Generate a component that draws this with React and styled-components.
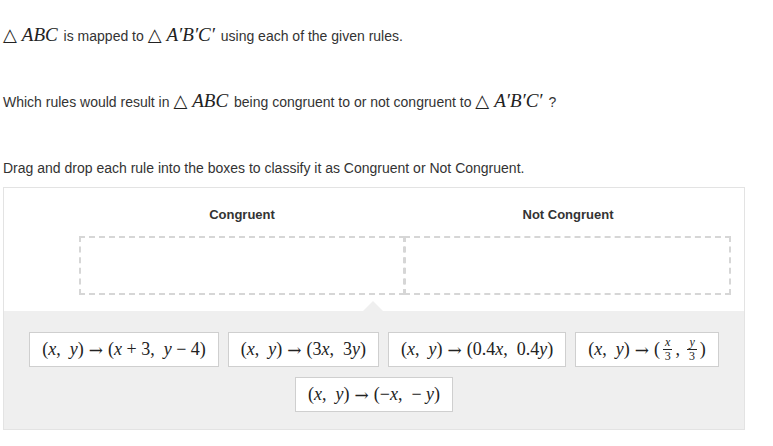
import React from "react";
import styled, { createGlobalStyle } from "styled-components";

const GlobalStyle = createGlobalStyle`
  body {
    margin: 0;
    background: #ffffff;
    font-family: "Liberation Sans", Arial, sans-serif;
    color: #333333;
  }
`;

const Page = styled.div`
  width: 773px;
  padding: 26px 0 0 3px;
  box-sizing: border-box;
`;

const Prompt = styled.p`
  margin: 0 0 ${props => props.gap || 46}px;
  font-size: 14px;
  line-height: 20px;
  height: 20px;
  white-space: nowrap;
`;

const Math = styled.span`
  font-family: "Liberation Serif", "DejaVu Serif", serif;
  font-size: 19px;
  line-height: 14px;
  color: #222;
  margin-right: 2px;
`;

const V = styled.i`
  font-style: italic;
`;

const Tri = styled.span`
  font-family: "DejaVu Sans", sans-serif;
  font-size: 18px;
  margin-right: 5px;
`;

const Panel = styled.div`
  width: 742px;
  border: 1px solid #e3e3e3;
  box-sizing: border-box;
`;

const Zones = styled.div`
  display: grid;
  grid-template-columns: 326px 326px;
  padding: 0 14px 16px 75px;
`;

const ZoneTitle = styled.div`
  font-weight: bold;
  font-size: 13px;
  text-align: center;
  line-height: 16px;
  padding: 19px 0 13px;
  color: #333;
`;

const DropBox = styled.div`
  height: 59px;
  border: 2px dashed #d6d6d6;
  box-sizing: border-box;
  margin-left: ${props => (props.joined ? "-1px" : "0")};
`;

const Tray = styled.div`
  position: relative;
  background: #efefef;
  padding: 21px 0 17px;
  display: flex;
  flex-direction: column;
  align-items: center;
  gap: 10px;
  &::before {
    content: "";
    position: absolute;
    top: -10px;
    left: 359px;
    border-left: 10px solid transparent;
    border-right: 10px solid transparent;
    border-bottom: 10px solid #efefef;
  }
`;

const ChipRow = styled.div`
  display: flex;
  gap: 9px;
`;

const Chip = styled.div`
  height: 35px;
  box-sizing: border-box;
  display: flex;
  align-items: center;
  padding: 0 12px;
  background: #fff;
  border: 1px solid #cfcfcf;
  font-family: "Liberation Serif", "DejaVu Serif", serif;
  font-size: 18px;
  color: #222;
  white-space: pre;
`;

const Frac = styled.span`
  display: inline-flex;
  flex-direction: column;
  align-items: center;
  font-size: 12px;
  line-height: 11px;
  margin: 0 3px;
  & > span:first-child {
    border-bottom: 1px solid #222;
    padding: 0 2px 1px;
    font-style: italic;
  }
  & > span:last-child {
    padding-top: 1px;
  }
`;

const Arrow = styled.span`
  font-family: "DejaVu Serif", serif;
  font-size: 17px;
  margin: 0 5px;
`;

const XY = () => (
  <>
    (<V>x</V>,  <V>y</V>)<Arrow>→</Arrow>
  </>
);

const Triangle = ({ children }) => (
  <Math>
    <Tri>△</Tri>
    <V>{children}</V>
  </Math>
);

export default function App() {
  return (
    <Page>
      <GlobalStyle />
      <Prompt>
        <Triangle>ABC</Triangle> is mapped to <Triangle>A′B′C′</Triangle> using each of the given rules.
      </Prompt>
      <Prompt>
        Which rules would result in <Triangle>ABC</Triangle> being congruent to or not congruent to{" "}
        <Triangle>A′B′C′</Triangle> ?
      </Prompt>
      <Prompt gap={9}>
        Drag and drop each rule into the boxes to classify it as Congruent or Not Congruent.
      </Prompt>
      <Panel>
        <Zones>
          <div>
            <ZoneTitle>Congruent</ZoneTitle>
            <DropBox />
          </div>
          <div>
            <ZoneTitle>Not Congruent</ZoneTitle>
            <DropBox joined />
          </div>
        </Zones>
        <Tray>
          <ChipRow>
            <Chip>
              <XY />(<V>x</V> + 3,  <V>y</V> − 4)
            </Chip>
            <Chip>
              <XY />(3<V>x</V>,  3<V>y</V>)
            </Chip>
            <Chip>
              <XY />(0.4<V>x</V>,  0.4<V>y</V>)
            </Chip>
            <Chip>
              <XY />(
              <Frac>
                <span>x</span>
                <span>3</span>
              </Frac>
              ,{" "}
              <Frac>
                <span>y</span>
                <span>3</span>
              </Frac>
              )
            </Chip>
          </ChipRow>
          <ChipRow>
            <Chip>
              <XY />(−<V>x</V>,  − <V>y</V>)
            </Chip>
          </ChipRow>
        </Tray>
      </Panel>
    </Page>
  );
}
